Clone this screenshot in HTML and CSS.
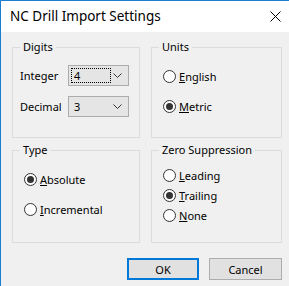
FILE: index.html
```html
<!DOCTYPE html>
<html lang="en">
<head>
  <meta charset="UTF-8">
  <meta name="viewport" content="width=device-width, initial-scale=1">
  <title>NC Drill Import Settings</title>
  <link rel="stylesheet" href="styles.css">
</head>
<body>

<div class="window">
  <div class="titlebar">
    <span class="title">NC Drill Import Settings</span>
    <svg class="close" width="11" height="11" viewBox="0 0 11 11" aria-label="Close">
      <path d="M0.5 0.5 L10.5 10.5 M10.5 0.5 L0.5 10.5" stroke="#000" stroke-width="1" fill="none"/>
    </svg>
  </div>

  <div class="content">
    <fieldset class="group">
      <legend>Digits</legend>
      <div class="digits">
        <div class="digit-row">
          <label class="digit-label">Integer</label>
          <div class="combo">
            <span class="combo-value focused">4</span>
            <svg class="chevron" width="9" height="5" viewBox="0 0 9 5"><path d="M0.5 0.5 L4.5 4.5 L8.5 0.5" stroke="#333" fill="none"/></svg>
          </div>
        </div>
        <div class="digit-row">
          <label class="digit-label">Decimal</label>
          <div class="combo">
            <span class="combo-value">3</span>
            <svg class="chevron" width="9" height="5" viewBox="0 0 9 5"><path d="M0.5 0.5 L4.5 4.5 L8.5 0.5" stroke="#333" fill="none"/></svg>
          </div>
        </div>
      </div>
    </fieldset>

    <fieldset class="group">
      <legend>Units</legend>
      <div class="options wide">
        <label class="option"><input type="radio" name="units"><span><u>E</u>nglish</span></label>
        <label class="option"><input type="radio" name="units" checked><span><u>M</u>etric</span></label>
      </div>
    </fieldset>

    <fieldset class="group">
      <legend>Type</legend>
      <div class="options wide">
        <label class="option"><input type="radio" name="type" checked><span><u>A</u>bsolute</span></label>
        <label class="option"><input type="radio" name="type"><span><u>I</u>ncremental</span></label>
      </div>
    </fieldset>

    <fieldset class="group">
      <legend>Zero Suppression</legend>
      <div class="options tight">
        <label class="option"><input type="radio" name="zero"><span><u>L</u>eading</span></label>
        <label class="option"><input type="radio" name="zero" checked><span><u>T</u>railing</span></label>
        <label class="option"><input type="radio" name="zero"><span><u>N</u>one</span></label>
      </div>
    </fieldset>
  </div>

  <div class="footer">
    <button class="default">OK</button>
    <button>Cancel</button>
  </div>
</div>

</body>
</html>
```

FILE: styles.css
```css
* {
  box-sizing: border-box;
}
body {
  margin: 0;
  background: #f0f0f0;
  font-family: 'Noto Sans', 'Segoe UI', sans-serif;
  font-size: 11px;
  color: #000;
}
.window {
  height: 286px;
  border-top: 1px solid #1a7fd4;
  border-left: 1px solid #1a7fd4;
  background: #f0f0f0;
}
.titlebar {
  height: 31px;
  background: #fff;
  display: flex;
  align-items: center;
  justify-content: space-between;
  padding: 0 8px 1px 9px;
}
.title {
  font-size: 13.5px;
  color: #000;
}
.close {
  display: block;
  margin-top: 1px;
}
.content {
  display: grid;
  grid-template-columns: 128px 131px;
  grid-template-rows: 99px 101px;
  column-gap: 11px;
  row-gap: 4px;
  padding: 7px 0 0 11px;
}
.group {
  margin: 0;
  padding: 0;
  min-width: 0;
  border: 1px solid #dcdcdc;
}
.group legend {
  margin-left: 7px;
  padding: 0 3px;
  line-height: 16px;
}
.digits {
  display: flex;
  flex-direction: column;
  gap: 10px;
  padding: 10px 0 0 7px;
}
.digit-row {
  display: flex;
  align-items: center;
}
.digit-label {
  width: 48px;
}
.combo {
  width: 61px;
  height: 21px;
  background: #e5e5e5;
  border: 1px solid #acacac;
  display: flex;
  align-items: center;
  justify-content: space-between;
  padding: 0 6px 0 2px;
}
.combo-value {
  width: 40px;
  height: 15px;
  line-height: 14px;
  padding-left: 2px;
  border: 1px dotted transparent;
}
.combo-value.focused {
  border-color: #000;
}
.chevron {
  display: block;
}
.options {
  display: flex;
  flex-direction: column;
  padding-left: 11px;
}
.options.wide {
  gap: 14px;
  padding-top: 13px;
}
.options.tight {
  gap: 4px;
  padding-top: 9px;
}
.option {
  display: flex;
  align-items: center;
  height: 16px;
  gap: 3px;
}
.option input {
  appearance: none;
  margin: 0;
  width: 13px;
  height: 13px;
  border: 1px solid #333;
  border-radius: 50%;
  background: #fff;
  display: grid;
  place-items: center;
}
.option input:checked::after {
  content: "";
  width: 7px;
  height: 7px;
  border-radius: 50%;
  background: #333;
}
.footer {
  display: flex;
  justify-content: flex-end;
  gap: 10px;
  padding: 15px 7px 0 0;
}
button {
  width: 73px;
  height: 22px;
  background: #e1e1e1;
  border: 1px solid #adadad;
  font-family: inherit;
  font-size: 11px;
  color: #000;
  padding: 0;
}
button.default {
  width: 72px;
  border: 2px solid #0078d7;
}
```
